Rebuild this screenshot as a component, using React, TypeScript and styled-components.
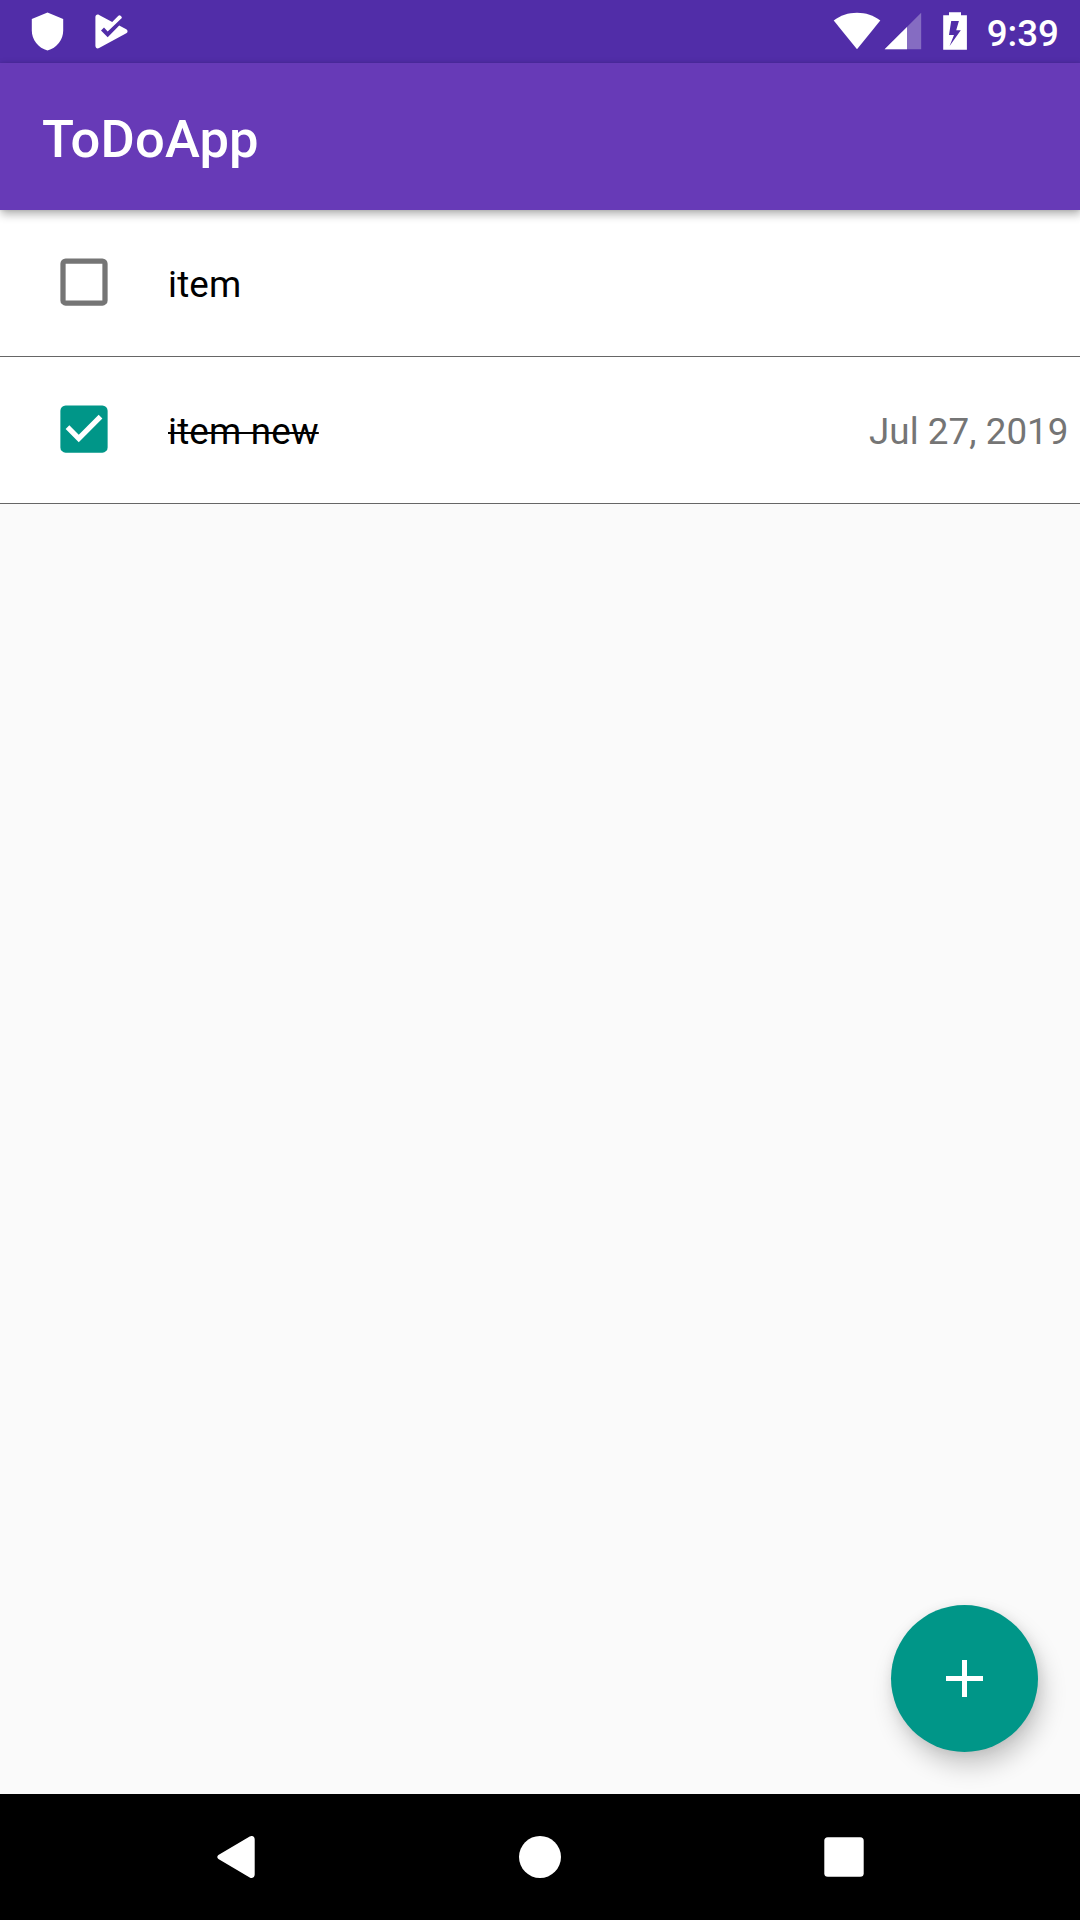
import React from "react";
import styled, { createGlobalStyle } from "styled-components";

const GlobalStyle = createGlobalStyle`
  *, *::before, *::after { box-sizing: border-box; }
  body { margin: 0; background: #fafafa; }
`;

const Screen = styled.div`
  position: relative;
  display: flex;
  flex-direction: column;
  width: 1080px;
  height: 1920px;
  overflow: hidden;
  background: #fafafa;
  font-family: Roboto, "Noto Sans", sans-serif;
`;

const StatusBar = styled.div`
  display: flex;
  flex: none;
  justify-content: space-between;
  height: 63px;
  padding: 0 21px 0 30px;
  background: #512da8;
  color: #fff;
`;

const StatusGroup = styled.div<{ $gap: number }>`
  display: flex;
  align-items: center;
  gap: ${(p) => p.$gap}px;
`;

const BatterySlot = styled.div`
  margin-left: 18px;
`;

const Clock = styled.span`
  margin-left: 17px;
  padding-top: 3px;
  font-size: 36.75px;
  line-height: 63px;
  font-weight: 500;
`;

const AppBar = styled.header`
  position: relative;
  z-index: 1;
  display: flex;
  flex: none;
  align-items: center;
  height: 147px;
  padding-left: 42px;
  background: #673ab7;
  box-shadow: 1px 4px 9px rgba(0, 0, 0, 0.32), 0 0 3px rgba(0, 0, 0, 0.1);
`;

const Title = styled.h1`
  margin: 0;
  padding-top: 4px;
  color: #fff;
  font-size: 52.5px;
  line-height: 62px;
  font-weight: 500;
  letter-spacing: 0.15px;
`;

const List = styled.ul`
  flex: 1;
  margin: 0;
  padding: 0;
  list-style: none;
`;

const Row = styled.li`
  display: flex;
  align-items: center;
  height: 147px;
  padding: 0 11.5px 0 42px;
  border-bottom: 1px solid #666;
  background: #fff;
`;

const CheckSlot = styled.div`
  display: flex;
  width: 84px;
  height: 84px;
  margin: 0 42px 2px 0;
`;

const ItemText = styled.span<{ $done: boolean }>`
  flex: none;
  padding-top: 3px;
  color: #000;
  font-size: 36.75px;
  line-height: 44px;
  letter-spacing: 0.2px;
  text-decoration: ${(p) => (p.$done ? "line-through 2px" : "none")};
  text-decoration-skip-ink: none;
`;

const DateText = styled.span`
  margin-left: auto;
  padding-top: 3px;
  color: #757575;
  font-size: 36.75px;
  line-height: 44px;
  letter-spacing: 0.05px;
`;

const Fab = styled.button`
  position: absolute;
  right: 42px;
  bottom: 168px;
  display: flex;
  align-items: center;
  justify-content: center;
  width: 147px;
  height: 147px;
  padding: 0;
  border: 0;
  border-radius: 50%;
  background: #009688;
  box-shadow: 5px 14px 24px rgba(0, 0, 0, 0.2), 1px 2px 12px rgba(0, 0, 0, 0.08);
`;

const NavBar = styled.nav`
  display: flex;
  flex: none;
  justify-content: center;
  height: 126px;
  background: #000;
`;

const NavKey = styled.button`
  display: flex;
  align-items: center;
  justify-content: center;
  width: 304px;
  padding: 0;
  border: 0;
  background: transparent;
`;

const Icon = styled.svg`
  display: block;
  flex: none;
  fill: #fff;
`;

const ShieldIcon = () => (
  <Icon width="35" height="63" viewBox="30 0 35 63">
    <path d="M47.5 12.6 63.2 19v11.8c0 9-6.5 17.3-15.7 19.7C38.3 48.1 31.8 39.8 31.8 30.8V19z" />
  </Icon>
);

const PlayCheckIcon = () => (
  <Icon width="36" height="63" viewBox="93 0 36 63">
    <path d="M95.4 17.2c0-2.2 1.8-3.3 3.700-2.300L112.200 21.900 118.400 15.700c.7-.7 1.500-.7 2.200 0l.7.7c.7.7.7 1.500 0 2.200L107.700 31.600 104 27.500 101 30.400 107.700 37.200 119.200 25.500 126.300 29.200c1.700.9 1.700 3.200 0 4.100L99.100 48.100c-1.900 1-3.700-.1-3.700-2.300z" />
  </Icon>
);

const WifiIcon = () => (
  <Icon width="48" height="63" viewBox="833 0 48 63">
    <path d="M857 49.2 833.7 20.4C840.3 15.4 848.3 12.7 857 12.7s16.7 2.700 23.300 7.700z" />
  </Icon>
);

const SignalIcon = () => (
  <Icon width="38" height="63" viewBox="884 0 38 63">
    <path d="M921.2 12.7V49.3H884.600z" opacity=".3" />
    <path d="M907 26.9V49.3H884.600z" />
  </Icon>
);

const BatteryIcon = () => (
  <Icon width="24" height="63" viewBox="943 0 24 63">
    <path
      fillRule="evenodd"
      d="M949 12.2h12v3h5.900v34.600h-23.700V15.200H949zM951.200 21 949 35.100h5L949.600 46 960.800 30.200h-4.600l2.700-9.200z"
    />
  </Icon>
);

const Checkbox = ({ checked }: { checked: boolean }) => (
  <Icon width="84" height="84" viewBox="0 0 32 32">
    {checked ? (
      <path
        fill="#009688"
        fillRule="evenodd"
        d="M9 7h14a2 2 0 0 1 2 2v14a2 2 0 0 1-2 2H9a2 2 0 0 1-2-2V9a2 2 0 0 1 2-2zM14 21l9-9-1.410-1.410L14 18.170l-3.590-3.580L9 16z"
      />
    ) : (
      <path
        fill="#757575"
        fillRule="evenodd"
        d="M9 7h14a2 2 0 0 1 2 2v14a2 2 0 0 1-2 2H9a2 2 0 0 1-2-2V9a2 2 0 0 1 2-2zM9 9v14h14V9z"
      />
    )}
  </Icon>
);

const PlusIcon = () => (
  <Icon width="37" height="37" viewBox="0 0 37 37">
    <path d="M16 0h5v16h16v5H21v16h-5V21H0v-5h16z" />
  </Icon>
);

const BackIcon = () => (
  <Icon width="38" height="42" viewBox="0 0 38 42">
    <path d="M1.4 19 32.7.6C35.2-.9 37.7.5 37.7 3.4V38.6c0 2.900-2.500 4.300-5 2.800L1.400 23C-.1 22.100-.1 19.900 1.400 19z" />
  </Icon>
);

const HomeIcon = () => (
  <Icon width="42" height="42" viewBox="0 0 42 42">
    <circle cx="21" cy="21" r="21" />
  </Icon>
);

const RecentsIcon = () => (
  <Icon width="40" height="40" viewBox="0 0 40 40">
    <rect x=".3" y=".3" width="39.4" height="39.4" rx="3.5" />
  </Icon>
);

type Todo = { text: string; done: boolean; date?: string };

const todos: Todo[] = [
  { text: "item", done: false },
  { text: "item new", done: true, date: "Jul 27, 2019" },
];

export default function App() {
  return (
    <>
      <GlobalStyle />
      <Screen>
        <StatusBar>
          <StatusGroup $gap={28}>
            <ShieldIcon />
            <PlayCheckIcon />
          </StatusGroup>
          <StatusGroup $gap={3}>
            <WifiIcon />
            <SignalIcon />
            <BatterySlot>
              <BatteryIcon />
            </BatterySlot>
            <Clock>9:39</Clock>
          </StatusGroup>
        </StatusBar>
        <AppBar>
          <Title>ToDoApp</Title>
        </AppBar>
        <List>
          {todos.map((t) => (
            <Row key={t.text}>
              <CheckSlot>
                <Checkbox checked={t.done} />
              </CheckSlot>
              <ItemText $done={t.done}>{t.text}</ItemText>
              {t.date && <DateText>{t.date}</DateText>}
            </Row>
          ))}
        </List>
        <NavBar>
          <NavKey aria-label="Back">
            <BackIcon />
          </NavKey>
          <NavKey aria-label="Home">
            <HomeIcon />
          </NavKey>
          <NavKey aria-label="Recents">
            <RecentsIcon />
          </NavKey>
        </NavBar>
        <Fab aria-label="Add">
          <PlusIcon />
        </Fab>
      </Screen>
    </>
  );
}
